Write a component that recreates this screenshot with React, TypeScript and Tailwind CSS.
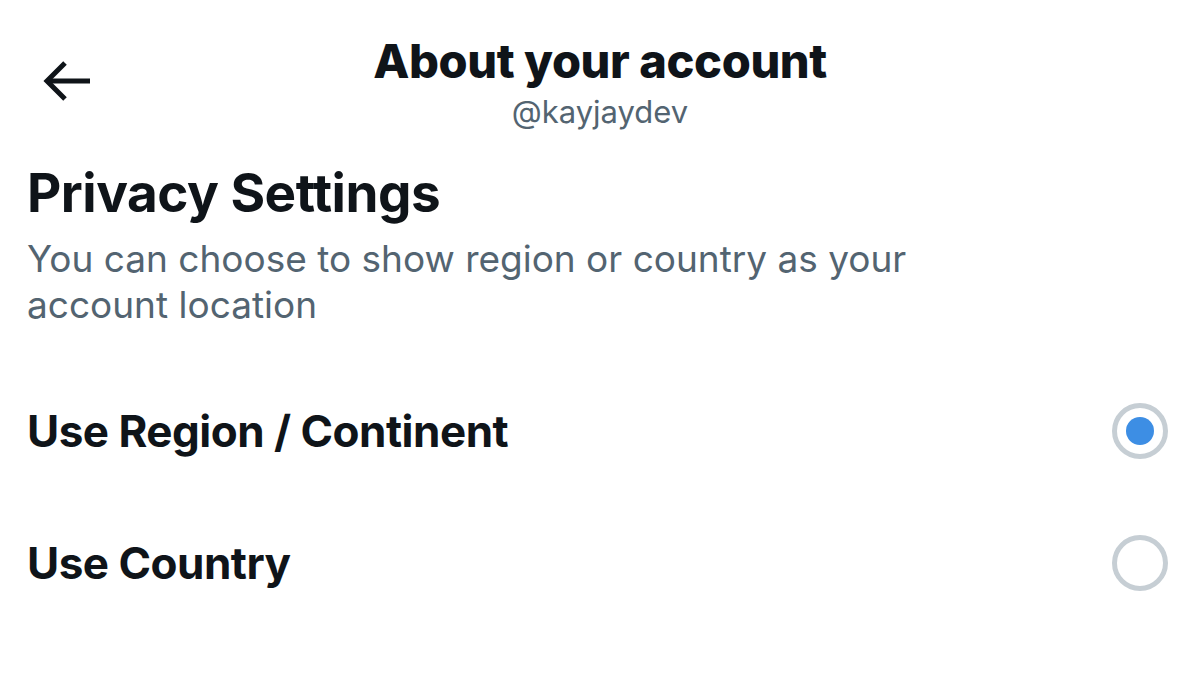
import React from "react";

export default function App() {
  return (
    <div className="w-[1200px] h-[684px] bg-white text-[#0f1419] overflow-hidden" style={{ fontFamily: "Inter, 'Noto Sans', sans-serif" }}>
      <div className="relative h-[140px] flex flex-col items-center pt-[34px]">
        <div className="absolute left-[40px] top-[58px]">
          <svg width="52" height="46" viewBox="0 0 52 46" fill="none" stroke="#0f1419" strokeWidth="5" strokeLinecap="butt">
            <path d="M50 23H8" />
            <path d="M25 5L7 23L25 41" />
          </svg>
        </div>
        <div className="text-[47px] leading-[54px] font-extrabold tracking-[-0.4px]">About your account</div>
        <div className="text-[31px] leading-[36px] text-[#536471] mt-[6px]">@kayjaydev</div>
      </div>
      <div className="px-[27px]">
        <div className="text-[53px] leading-[60px] font-bold mt-[23px] tracking-[-0.5px]">Privacy Settings</div>
        <div className="text-[37px] leading-[46px] text-[#536471] mt-[13px] w-[900px]">You can choose to show region or country as your account location</div>
      </div>
      <div className="mt-[37px]">
        <div className="flex items-center justify-between pl-[27px] pr-[32px] h-[132px]">
          <span className="text-[44px] font-bold tracking-[-0.5px]">Use Region / Continent</span>
          <span className="w-[56px] h-[56px] rounded-full border-[5px] border-[#c6ced4] flex items-center justify-center">
            <span className="w-[28px] h-[28px] rounded-full bg-[#3d8ee4]" />
          </span>
        </div>
        <div className="flex items-center justify-between pl-[27px] pr-[32px] h-[132px]">
          <span className="text-[44px] font-bold tracking-[-0.5px]">Use Country</span>
          <span className="w-[56px] h-[56px] rounded-full border-[5px] border-[#c6ced4]" />
        </div>
      </div>
    </div>
  );
}
